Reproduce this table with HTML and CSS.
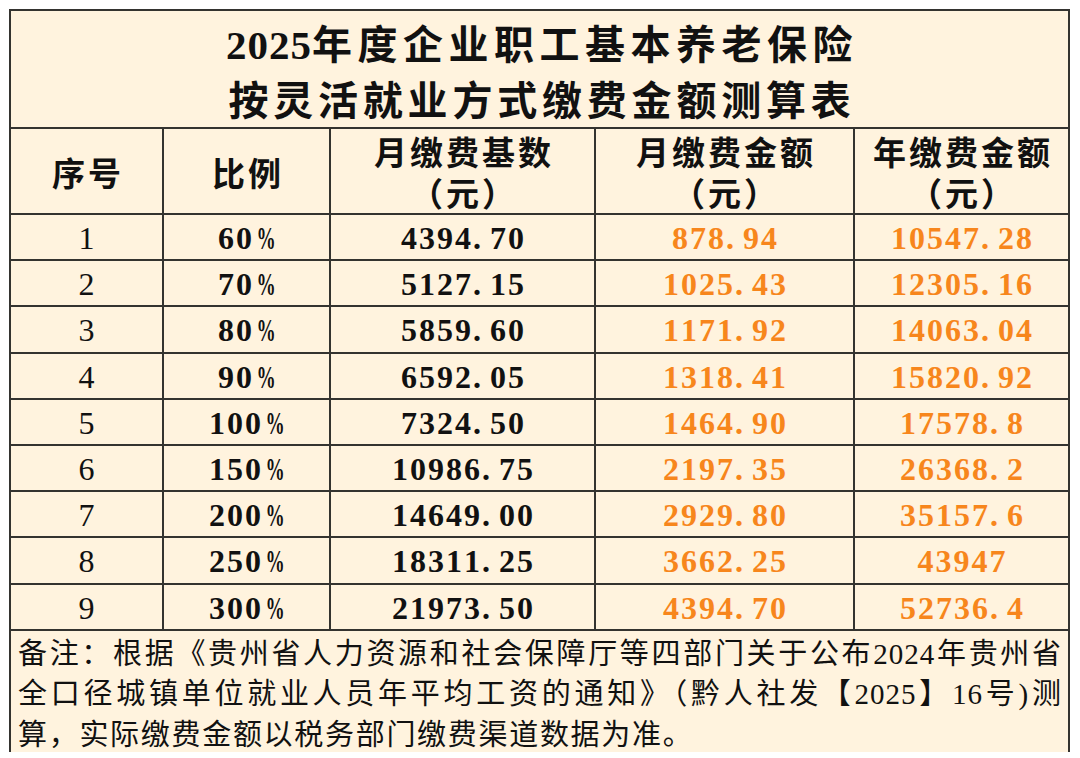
FILE: index.html
```html
<!DOCTYPE html>
<html lang="zh-CN">
<head>
<meta charset="utf-8">
<title>2025年度企业职工基本养老保险按灵活就业方式缴费金额测算表</title>
<link rel="stylesheet" href="styles.css">
</head>
<body>
<table class="sheet">
  <colgroup>
    <col class="c1"><col class="c2"><col class="c3"><col class="c4"><col class="c5">
  </colgroup>
  <tr class="title-row">
    <td colspan="5">
      <div class="t1"><span class="lat">2025</span>年度企业职工基本养老保险</div>
      <div class="t2">按灵活就业方式缴费金额测算表</div>
    </td>
  </tr>
  <tr class="head-row">
    <th>序号</th>
    <th>比例</th>
    <th><div>月缴费基数</div><div>（元）</div></th>
    <th><div>月缴费金额</div><div>（元）</div></th>
    <th><div>年缴费金额</div><div>（元）</div></th>
  </tr>
  <tr class="row"><td class="idx">1</td><td class="pct">60<span class="pc">%</span></td><td class="base">4394<span class="pt">.</span>70</td><td class="amt">878<span class="pt">.</span>94</td><td class="amt">10547<span class="pt">.</span>28</td></tr>
  <tr class="row"><td class="idx">2</td><td class="pct">70<span class="pc">%</span></td><td class="base">5127<span class="pt">.</span>15</td><td class="amt">1025<span class="pt">.</span>43</td><td class="amt">12305<span class="pt">.</span>16</td></tr>
  <tr class="row"><td class="idx">3</td><td class="pct">80<span class="pc">%</span></td><td class="base">5859<span class="pt">.</span>60</td><td class="amt">1171<span class="pt">.</span>92</td><td class="amt">14063<span class="pt">.</span>04</td></tr>
  <tr class="row"><td class="idx">4</td><td class="pct">90<span class="pc">%</span></td><td class="base">6592<span class="pt">.</span>05</td><td class="amt">1318<span class="pt">.</span>41</td><td class="amt">15820<span class="pt">.</span>92</td></tr>
  <tr class="row"><td class="idx">5</td><td class="pct">100<span class="pc">%</span></td><td class="base">7324<span class="pt">.</span>50</td><td class="amt">1464<span class="pt">.</span>90</td><td class="amt">17578<span class="pt">.</span>8</td></tr>
  <tr class="row"><td class="idx">6</td><td class="pct">150<span class="pc">%</span></td><td class="base">10986<span class="pt">.</span>75</td><td class="amt">2197<span class="pt">.</span>35</td><td class="amt">26368<span class="pt">.</span>2</td></tr>
  <tr class="row"><td class="idx">7</td><td class="pct">200<span class="pc">%</span></td><td class="base">14649<span class="pt">.</span>00</td><td class="amt">2929<span class="pt">.</span>80</td><td class="amt">35157<span class="pt">.</span>6</td></tr>
  <tr class="row"><td class="idx">8</td><td class="pct">250<span class="pc">%</span></td><td class="base">18311<span class="pt">.</span>25</td><td class="amt">3662<span class="pt">.</span>25</td><td class="amt">43947</td></tr>
  <tr class="row"><td class="idx">9</td><td class="pct">300<span class="pc">%</span></td><td class="base">21973<span class="pt">.</span>50</td><td class="amt">4394<span class="pt">.</span>70</td><td class="amt">52736<span class="pt">.</span>4</td></tr>
  <tr class="note-row">
    <td colspan="5">
      <div class="nl just">备注：根据《贵州省人力资源和社会保障厅等四部门关于公布<span class="lat">2024</span>年贵州省</div>
      <div class="nl just">全口径城镇单位就业人员年平均工资的通知》（黔人社发【<span class="lat">2025</span>】<span class="lat">16</span>号<span class="lat">)</span>测</div>
      <div class="nl">算，实际缴费金额以税务部门缴费渠道数据为准。</div>
    </td>
  </tr>
</table>
</body>
</html>
```

FILE: styles.css
```css
html, body {
  margin: 0;
  padding: 0;
  background: #ffffff;
}

body {
  font-family: "Noto Sans CJK SC", sans-serif;
  font-kerning: none;
  color: #111111;
}

.lat {
  font-family: "Liberation Serif", serif;
}

.sheet {
  margin: 9px 0 0 9px;
  width: 1061px;
  border-collapse: collapse;
  table-layout: fixed;
  background: #fff3de;
  border: 2px solid #4e4b44;
}

.c1 { width: 153px; }
.c2 { width: 167px; }
.c3 { width: 265px; }
.c4 { width: 259px; }
.c5 { width: 215px; }

.sheet td,
.sheet th {
  border: 2px solid #34332f;
  padding: 0;
  text-align: center;
  vertical-align: middle;
}

.title-row td {
  height: 114px;
  padding-top: 2px;
  font-size: 40px;
  font-weight: 600;
  line-height: 53px;
}

.t1 {
  letter-spacing: 5.5px;
  text-indent: 5px;
}

.t1 .lat {
  letter-spacing: 1px;
  font-size: 41px;
}

.t2 {
  letter-spacing: 4.8px;
  text-indent: 5px;
}

.head-row th {
  height: 82px;
  padding-top: 2px;
  font-size: 33px;
  font-weight: 600;
  line-height: 41px;
  letter-spacing: 3px;
  text-indent: 3px;
}

.row td {
  height: 42.2px;
  padding-top: 2px;
  font-family: "Liberation Serif", serif;
  font-size: 32px;
  line-height: 40px;
  letter-spacing: 2px;
  text-indent: 2px;
}

.idx {
  font-weight: 400;
}

.pct,
.base {
  font-weight: 700;
}

.amt {
  font-weight: 700;
  color: #f7861c;
}

.pt {
  margin-right: 7px;
}

.pc {
  display: inline-block;
  transform: scaleX(0.6);
  margin: 0 -7px 0 -6px;
}

.note-row td {
  height: 116px;
  border-bottom: hidden;
  vertical-align: top;
  text-align: left;
  padding: 0 6px 0 7px;
  font-size: 29px;
  line-height: 40.5px;
  letter-spacing: 1.7px;
  font-weight: 400;
}

.note-row .lat {
  line-height: 1;
}

.nl {
  height: 40.5px;
  white-space: nowrap;
}

.nl.just {
  text-align: justify;
  text-align-last: justify;
  letter-spacing: 1px;
}
```
